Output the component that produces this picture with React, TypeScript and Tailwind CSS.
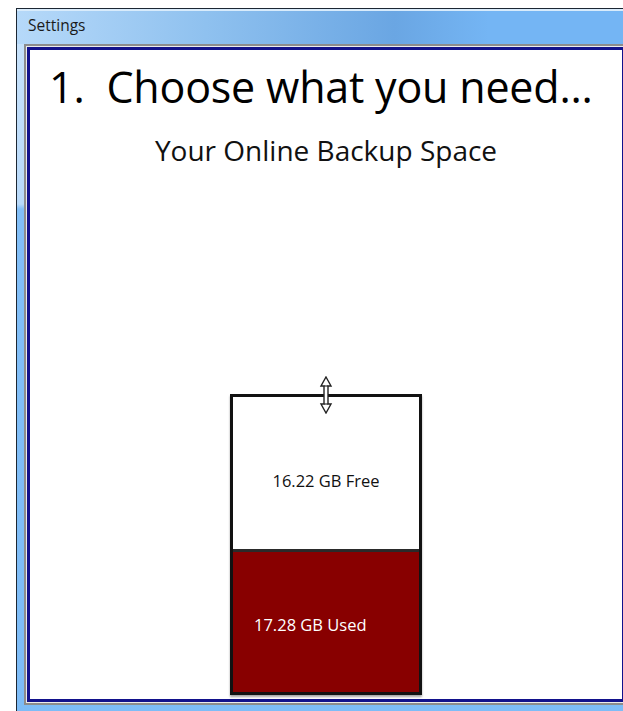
import React from "react";

// Vertical resize grip sitting on the top edge of the bar
function ResizeGrip() {
    return (
        <svg width="14" height="38" viewBox="0 0 14 38" className="block">
            <path
                d="M7 1 L12 10 L9 10 L9 28 L12 28 L7 37 L2 28 L5 28 L5 10 L2 10 Z"
                fill="white"
                stroke="#222"
                strokeWidth="1.4"
                strokeLinejoin="miter"
            />
            <line x1="5" y1="10" x2="9" y2="10" stroke="#222" strokeWidth="1.1" />
            <line x1="5" y1="28" x2="9" y2="28" stroke="#222" strokeWidth="1.1" />
        </svg>
    );
}

function SpaceBar() {
    return (
        <div className="relative w-[192px] h-[301px] border-[3px] border-[#121212] flex flex-col shadow-[0_2px_2px_rgba(0,0,0,0.35)]">
            <div className="absolute left-1/2 -translate-x-1/2 top-[-21px]">
                <ResizeGrip />
            </div>
            <div className="h-[152px] bg-white flex items-center justify-center pt-[17px] text-[16.5px] text-[#111]">
                16.22 GB Free
            </div>
            <div className="h-[3px] bg-[#2a2a2a]" />
            <div className="flex-1 bg-[#880000] flex items-center pl-[21px] pt-[6px] text-[16.5px] text-white">
                17.28 GB Used
            </div>
        </div>
    );
}

export default function App() {
    return (
        <div
            className="w-[623px] h-[711px] overflow-hidden bg-white pt-[8px] pl-[16px]"
            style={{ fontFamily: '"Open Sans", "Noto Sans", sans-serif' }}
        >
            <div className="w-[630px] h-[720px] border-l border-t border-[#1c2733] bg-[linear-gradient(180deg,#c9e3fb_0px,#b9dafa_195px,#82bff8_200px,#7dbcf7_100%)] pl-[7px]">
                {/* title bar */}
                <div className="h-[35px] -ml-[7px] pl-[11px] pt-[2px] bg-[linear-gradient(90deg,#b6d9f9_0%,#8fc1ef_30%,#6aa6e3_60%,#74b5f4_75%,#74b5f4_100%)] border-t-2 border-[#d8ebfb]">
                    <span className="text-[15.5px] text-[#1a1a1a] leading-none">Settings</span>
                </div>
                {/* client frame */}
                <div className="w-[604px] border-2 border-[#8c8c8c] bg-[#ececec] p-px">
                    <div className="border-[3px] border-[#12128c] bg-white w-[598px] h-[655px] flex flex-col items-center">
                        <h1 className="self-start ml-[19px] mt-[12px] text-[43px] leading-[50px] text-black tracking-[-0.2px]">
                            1.&nbsp; Choose what you need...
                        </h1>
                        <h2 className="mt-[22px] text-[28px] leading-[32px] text-[#111]">
                            Your Online Backup Space
                        </h2>
                        <div className="flex-1" />
                        <div className="mb-[4px]">
                            <SpaceBar />
                        </div>
                    </div>
                </div>
            </div>
        </div>
    );
}
